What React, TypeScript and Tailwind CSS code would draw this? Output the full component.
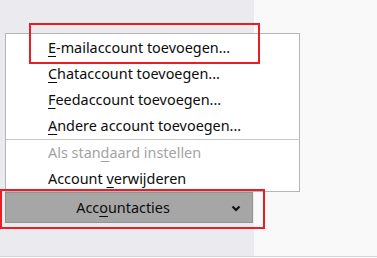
import React from 'react';

// menu row with an underlined access key
const Item = ({ pre, k, post, disabled = false }: { pre: string; k: string; post: string; disabled?: boolean }) => (
  <div className={`h-[26px] leading-[26px] pl-[42px] whitespace-pre ${disabled ? 'text-[#a3a3a3]' : 'text-[#0c0c0d]'}`}>
    {pre}
    <span className="underline underline-offset-[3px] decoration-1">{k}</span>
    {post}
  </div>
);

export default function App() {
  return (
    <div
      className="relative w-[377px] h-[258px] flex overflow-hidden text-[14.4px]"
      style={{ fontFamily: '"Noto Sans", "Open Sans", sans-serif' }}
    >
      {/* left pane */}
      <div className="w-[254px] h-[256px] bg-[#ebebef] pt-[192px] px-[5px]">
        <button className="w-[248px] h-[31px] bg-[#a6a6a6] border border-[#939393] flex items-center justify-center pr-[12px] relative text-[#0c0c0d]">
          <span>
            Acc<span className="underline underline-offset-[3px] decoration-1">o</span>untacties
          </span>
          <svg className="absolute right-[11px] top-[12px]" width="10" height="7" viewBox="0 0 10 7">
            <path d="M1.5 1.5 L5 5 L8.5 1.5" fill="none" stroke="#111" strokeWidth="2.2" />
          </svg>
        </button>
      </div>
      {/* right pane */}
      <div className="flex-1 h-[256px] bg-[#f9f9fa]" />
      <div className="absolute left-0 right-0 bottom-0 h-[2px] border-t border-[#d4d4d8] bg-white" />

      {/* popup menu */}
      <div className="absolute left-[5px] top-[33px] w-[295px] h-[159px] bg-white border border-[#b5b5b5] pt-[1px]">
        <Item pre="" k="E" post="-mailaccount toevoegen..." />
        <Item pre="" k="C" post="hataccount toevoegen..." />
        <Item pre="" k="F" post="eedaccount toevoegen..." />
        <Item pre="" k="A" post="ndere account toevoegen..." />
        <div className="h-px bg-[#c8c8c8]" />
        <Item pre="Als stan" k="d" post="aard instellen" disabled />
        <Item pre="Account " k="v" post="erwijderen" />
      </div>

      {/* annotation boxes */}
      <div className="absolute left-[29px] top-[23px] w-[231px] h-[41px] border-2 border-[#ec1c24]" />
      <div className="absolute left-0 top-[189px] w-[265px] h-[40px] border-2 border-[#ec1c24]" />
    </div>
  );
}
